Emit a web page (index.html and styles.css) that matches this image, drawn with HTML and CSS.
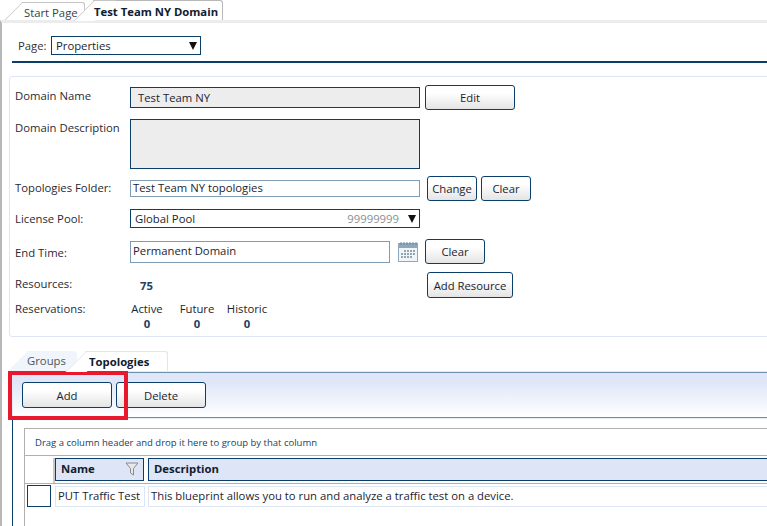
FILE: index.html
```html
<!DOCTYPE html>
<html>
<head>
  <title>Test Team NY Domain</title>
  <link rel="stylesheet" href="styles.css">
</head>
<body>
  <div class="tabs">
    <div class="tab">Start Page</div>
    <div class="tab tab-active">Test Team NY Domain</div>
  </div>

  <div class="frame">
    <div class="page-row">
      <label class="page-label">Page:</label>
      <div class="select page-select">Properties<span class="arrow"></span></div>
    </div>

    <div class="panel">
      <div class="row row-name">
        <div class="label">Domain Name</div>
        <div class="field field-ro field-name">Test Team NY</div>
        <button class="btn btn-edit">Edit</button>
      </div>
      <div class="row row-desc">
        <div class="label">Domain Description</div>
        <div class="field field-ro field-desc"></div>
      </div>
      <div class="row row-folder">
        <div class="label">Topologies Folder:</div>
        <div class="field field-folder">Test Team NY topologies</div>
        <button class="btn btn-change">Change</button>
        <button class="btn btn-clear">Clear</button>
      </div>
      <div class="row row-license">
        <div class="label">License Pool:</div>
        <div class="select license-select">Global Pool<span class="count">99999999</span><span class="arrow"></span></div>
      </div>
      <div class="row row-end">
        <div class="label">End Time:</div>
        <div class="field field-end">Permanent Domain</div>
        <svg class="cal" width="20" height="20" viewBox="0 0 20 20">
          <rect x="0" y="1" width="20" height="19" fill="#8fa6bb"/>
          <rect x="1" y="6" width="18" height="13" fill="#f2f5f8"/>
          <path d="M3 0v3M6 0v3M9 0v3M12 0v3M15 0v3M18 0v3" stroke="#6f8aa3" stroke-width="1"/>
          <path d="M6 8h2v2H6zM9 8h2v2H9zM12 8h2v2h-2zM15 8h2v2h-2zM3 11h2v2H3zM6 11h2v2H6zM9 11h2v2H9zM12 11h2v2h-2zM15 11h2v2h-2zM3 14h2v2H3zM6 14h2v2H6zM9 14h2v2H9zM12 14h2v2h-2z" fill="#8fa6bb"/>
        </svg>
        <button class="btn btn-clear2">Clear</button>
      </div>
      <div class="row row-res">
        <div class="label">Resources:</div>
        <div class="res-count">75</div>
        <button class="btn btn-addres">Add Resource</button>
      </div>
      <div class="row row-reserv">
        <div class="label">Reservations:</div>
        <div class="stat"><span>Active</span><b>0</b></div>
        <div class="stat"><span>Future</span><b>0</b></div>
        <div class="stat"><span>Historic</span><b>0</b></div>
      </div>
    </div>

    <div class="subtabs">
      <div class="subtab">Groups</div>
      <div class="subtab subtab-active">Topologies</div>
    </div>

    <div class="sub-body">
      <div class="toolbar">
        <button class="btn btn-add">Add</button>
        <button class="btn btn-delete">Delete</button>
      </div>
      <div class="highlight"></div>

      <div class="grid">
        <div class="group-hint">Drag a column header and drop it here to group by that column</div>
        <div class="grid-head">
          <div class="corner"></div>
          <div class="col col-name">Name
            <svg class="filter" width="14" height="14" viewBox="0 0 14 14">
              <path d="M1 1h12L8.500 6.500V13L5.500 11V6.500z" fill="#e8e8e8" stroke="#8a8a8a" stroke-width="1"/>
            </svg>
          </div>
          <div class="col col-desc">Description</div>
        </div>
        <div class="grid-row">
          <div class="check"></div>
          <div class="cell cell-name">PUT Traffic Test</div>
          <div class="cell cell-desc">This blueprint allows you to run and analyze a traffic test on a device.</div>
        </div>
      </div>
    </div>
  </div>
</body>
</html>
```

FILE: styles.css
```css
* {
  box-sizing: border-box;
}

html, body {
  margin: 0;
  height: 526px;
  overflow: hidden;
}

body {
  width: 767px;
  background: #fff;
  color: #1c2430;
  font-family: "Open Sans", "Noto Sans", sans-serif;
  font-size: 11.3px;
}

/* top tabs */
.tabs {
  display: flex;
  height: 20px;
  padding-left: 24px;
}

.tab {
  position: relative;
  width: 61px;
  height: 18px;
  margin-top: 2px;
  line-height: 19px;
  color: #3a3f47;
  background: #fff;
  border-top: 1px solid #c4c4c4;
  border-right: 1px solid #c4c4c4;
  border-top-right-radius: 3px;
  white-space: nowrap;
}

.tab::before {
  content: "";
  position: absolute;
  left: -11px;
  top: -1px;
  width: 20px;
  height: 18px;
  border-left: 1px solid #c4c4c4;
  border-top: 1px solid #c4c4c4;
  transform: skewX(-45deg);
  z-index: -1;
}

.tab-active {
  width: 130px;
  height: 20px;
  margin-top: 0;
  margin-left: 8px;
  padding-left: 1px;
  line-height: 21px;
  font-weight: 700;
  color: #10202f;
  border-color: #b8b8b8;
  z-index: 1;
}

.tab-active::before {
  left: -9px;
  height: 20px;
  background: #fff;
}

.frame {
  position: relative;
  height: 506px;
  border-top: 3px solid #ececec;
  border-left: 2px solid #b8b8b8;
  overflow: hidden;
}

/* page selector */
.page-row {
  display: flex;
  align-items: center;
  box-sizing: content-box;
  width: 800px;
  height: 19px;
  margin-left: 10px;
  padding: 13px 0 6px 6px;
  border-bottom: 2px solid #0b3f6b;
}

.page-label {
  width: 33px;
  color: #3a3030;
}

.select {
  position: relative;
  display: flex;
  align-items: center;
  height: 19px;
  border: 1px solid #0b3f6b;
  padding-left: 4px;
}

.page-select {
  width: 150px;
}

.arrow {
  position: absolute;
  right: 3px;
  top: 5px;
  width: 0;
  height: 0;
  border-left: 4.500px solid transparent;
  border-right: 4.500px solid transparent;
  border-top: 8px solid #111;
}

.count {
  position: absolute;
  right: 20px;
  top: 1px;
  color: #8b8f96;
}

/* domain panel */
.panel {
  width: 800px;
  height: 261px;
  margin: 13px 0 0 7px;
  padding: 8px 0 0 5px;
  border: 1px solid #dde6f5;
  border-radius: 3px;
}

.row {
  display: flex;
  align-items: center;
}

.label {
  width: 115px;
  flex: none;
  color: #2a2a30;
  margin-top: -3px;
}

.field {
  border: 1px solid #7f9cb5;
  width: 290px;
  padding-left: 2px;
  padding-bottom: 1px;
  color: #1c2430;
}

.field-ro {
  background: #ededed;
  border-color: #0b3f6b;
}

.btn {
  height: 25px;
  padding: 0;
  border: 1px solid #0b3f6b;
  border-radius: 3px;
  background: linear-gradient(#fff 30%, #e4e4e4);
  color: #1c2430;
  font-family: inherit;
  font-size: 11.3px;
}

.row-name {
  height: 25px;
}

.row-name .label {
  margin-top: -5px;
}

.field-name {
  height: 21px;
  padding-left: 7px;
  line-height: 19px;
}

.btn-edit {
  width: 90px;
  margin-left: 5px;
}

.row-desc {
  height: 50px;
  margin-top: 9px;
  align-items: flex-start;
}

.row-desc .label {
  margin-top: 1px;
}

.field-desc {
  height: 50px;
}

.row-folder {
  height: 25px;
  margin-top: 7px;
}

.field-folder {
  height: 17px;
  line-height: 14px;
}

.btn-change {
  width: 50px;
  margin-left: 7px;
}

.btn-clear {
  width: 50px;
  margin-left: 4px;
}

.row-license {
  height: 19px;
  margin-top: 8px;
}

.row-license .label {
  margin-top: -1px;
}

.license-select {
  width: 290px;
}

.row-end {
  height: 25px;
  margin-top: 11px;
}

.row-end .label {
  margin-top: 1px;
}

.field-end {
  width: 260px;
  height: 22px;
  line-height: 17px;
}

.cal {
  margin-left: 8px;
  flex: none;
}

.btn-clear2 {
  width: 60px;
  margin-left: 7px;
}

.row-res {
  height: 26px;
  margin-top: 8px;
}

.res-count {
  width: 182px;
  padding-left: 10px;
  font-weight: 700;
  color: #23405f;
}

.btn-addres {
  width: 86px;
  height: 26px;
  margin-left: 115px;
}

.row-reserv {
  height: 30px;
  margin-top: 3px;
  align-items: flex-start;
}

.row-reserv .label {
  width: 107px;
  margin-top: 0;
}

.stat {
  display: flex;
  flex-direction: column;
  align-items: center;
  width: 50px;
  line-height: 15px;
}

.stat b {
  color: #23405f;
}

/* lower tabs */
.subtabs {
  display: flex;
  height: 20px;
  margin-top: 14px;
  padding-left: 25px;
}

.subtab {
  position: relative;
  width: 50px;
  line-height: 20px;
  color: #4d5560;
  background: #f0f4fb;
  border-top-right-radius: 3px;
}

.subtab::before {
  content: "";
  position: absolute;
  left: -9px;
  top: 0;
  width: 20px;
  height: 20px;
  background: #f0f4fb;
  transform: skewX(-45deg);
  z-index: -1;
}

.subtab-active {
  width: 83px;
  margin-left: 8px;
  padding-left: 4px;
  font-weight: 700;
  color: #10202f;
  background: #fff;
  border-top: 1px solid #dde6f5;
  border-right: 1px solid #dde6f5;
  z-index: 1;
}

.subtab-active::before {
  top: -1px;
  background: #fff;
  border-left: 1px solid #dde6f5;
  border-top: 1px solid #dde6f5;
}

.sub-body {
  position: relative;
  width: 800px;
  height: 160px;
  margin-left: 10px;
  margin-top: 1px;
  border-left: 1px solid #0b3f6b;
}

.toolbar {
  display: flex;
  gap: 4px;
  height: 46px;
  padding: 9px 0 0 9px;
  border-top: 1px solid #6f8fae;
  border-bottom: 1px solid #6f8fae;
  background: linear-gradient(#dfe6f7, #dfe6f7 20%, #fff);
  outline: 1px solid #e4eaf6;
}

.btn-add,
.btn-delete {
  width: 90px;
  height: 26px;
}

.highlight {
  position: absolute;
  left: -5px;
  top: -1px;
  width: 120px;
  height: 49px;
  border: 4px solid #e8192c;
}

/* grid */
.grid {
  height: 110px;
  margin: 10px 0 0 11px;
  border-top: 1px solid #b0b0b0;
  border-left: 1px solid #b0b0b0;
}

.group-hint {
  height: 27px;
  padding: 7px 0 0 10px;
  font-size: 9.500px;
  line-height: 13px;
  color: #23405f;
  border-bottom: 1px solid #b0b0b0;
}

.grid-head {
  display: flex;
  height: 28px;
  padding-top: 2px;
  background: #fff;
  border-bottom: 1px solid #b0b0b0;
}

.corner {
  width: 30px;
  height: 25px;
  border-right: 2px solid #c8c8c8;
}

.col {
  position: relative;
  height: 23px;
  border: 1px solid #0b3f6b;
  background: #dde5f6;
  font-weight: 700;
  line-height: 19px;
  padding-left: 5px;
  color: #10202f;
}

.col-name {
  width: 89px;
}

.col-desc {
  width: 640px;
  margin-left: 4px;
}

.filter {
  position: absolute;
  right: 4px;
  top: 3px;
}

.grid-row {
  display: flex;
  height: 24px;
  padding-left: 2px;
  padding-top: 1px;
}

.check {
  width: 24px;
  height: 22px;
  border: 1px solid #0b3f6b;
  margin-right: 4px;
}

.cell {
  height: 21px;
  margin-top: 1px;
  line-height: 17px;
  padding-left: 2px;
  border: 1px solid #dde6f5;
  white-space: nowrap;
}

.cell-name {
  width: 90px;
}

.cell-desc {
  width: 640px;
  margin-left: 3px;
}
```
